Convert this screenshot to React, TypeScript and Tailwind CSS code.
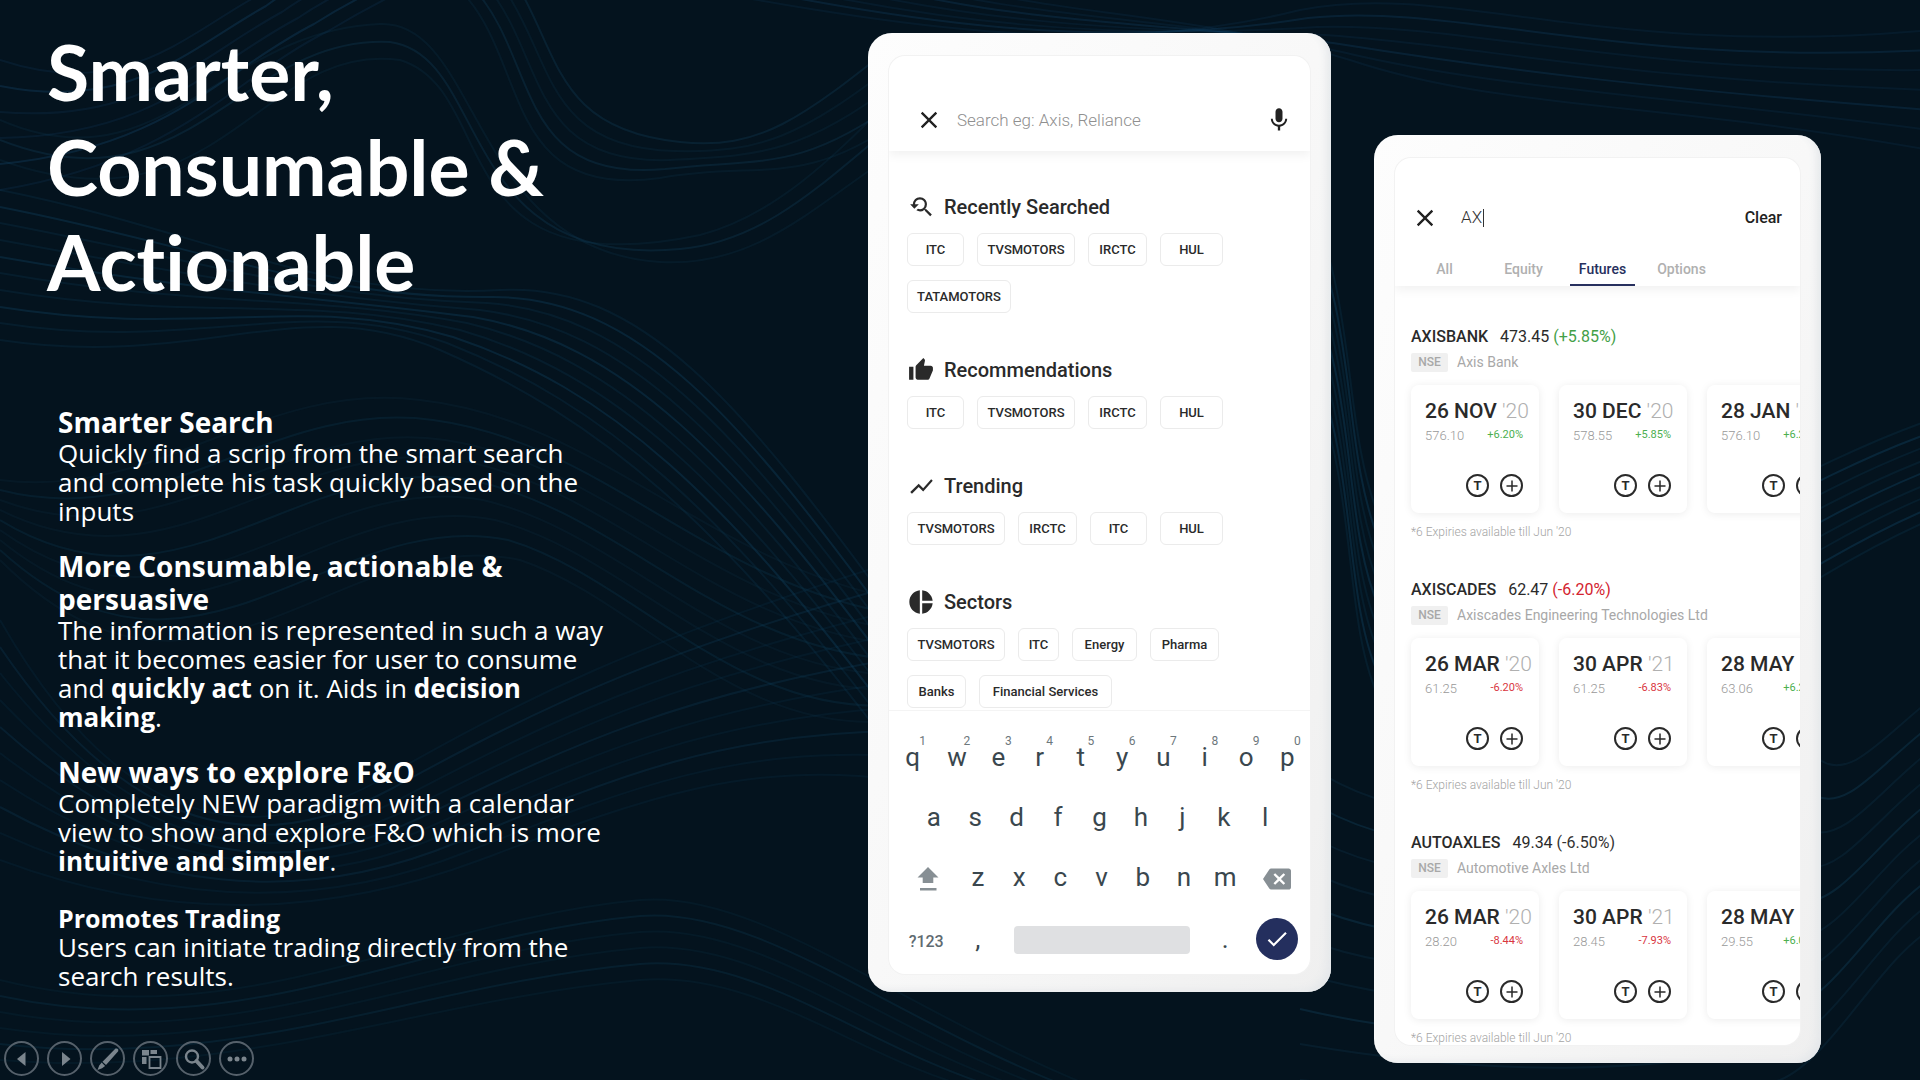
import type { ReactNode } from "react";
import {
  MdBackspace,
  MdCheck,
  MdClose,
  MdMic,
  MdPieChart,
  MdShowChart,
  MdThumbUp,
  MdYoutubeSearchedFor,
} from "react-icons/md";

/* ---------- background ---------- */

type Bundle = { from: number[]; to: number[]; count: number; color: string; opacity: number };

// Each bundle blends one cubic chain into another: x0 y0, then three points per curve.
const bundles: Bundle[] = [
  {
    from: [0, 60, 120, 100, 180, 40, 250, 0, 300, -40, 380, -60, 460, -90],
    to: [0, 190, 180, 160, 230, 80, 330, 30, 380, 0, 420, -20, 520, -60],
    count: 6, color: "#17507a", opacity: 0.24,
  },
  {
    from: [0, 120, 160, 190, 220, 30, 380, 24, 480, 20, 470, 250, 660, 262, 760, 268, 820, 200, 900, 150],
    to: [0, 160, 220, 240, 260, 40, 400, 60, 500, 90, 440, 290, 700, 235, 780, 214, 840, 150, 900, 90],
    count: 3, color: "#12415c", opacity: 0.26,
  },
  {
    from: [460, -10, 530, 60, 500, 200, 660, 178, 760, 160, 800, 190, 900, 120],
    to: [520, -10, 560, 60, 560, 130, 680, 142, 760, 150, 800, 120, 900, 40],
    count: 5, color: "#12415c", opacity: 0.26,
  },
  {
    from: [0, 190, 200, 230, 320, 300, 500, 290, 640, 282, 740, 400, 900, 620],
    to: [0, 340, 200, 370, 300, 290, 440, 350, 600, 420, 720, 520, 900, 760],
    count: 10, color: "#155a86", opacity: 0.2,
  },
  {
    from: [0, 480, 160, 500, 260, 380, 420, 400, 600, 420, 700, 560, 900, 600],
    to: [0, 560, 200, 760, 340, 520, 520, 560, 640, 600, 740, 740, 900, 720],
    count: 9, color: "#0f3c55", opacity: 0.24,
  },
  {
    from: [0, 620, 80, 760, 200, 880, 380, 780, 520, 700, 640, 640, 900, 560],
    to: [0, 860, 160, 920, 320, 920, 480, 860, 640, 800, 740, 760, 900, 780],
    count: 10, color: "#11496a", opacity: 0.2,
  },
  {
    from: [0, 980, 240, 1040, 420, 920, 640, 900, 760, 890, 900, 1010, 1100, 1090],
    to: [0, 1060, 240, 1080, 420, 1000, 640, 980, 760, 970, 860, 1060, 980, 1090],
    count: 6, color: "#10405c", opacity: 0.22,
  },
  {
    from: [600, -30, 900, 30, 1100, 60, 1300, 10, 1450, -20, 1600, 60, 1930, 30],
    to: [900, -40, 1000, 20, 1150, 0, 1350, 60, 1500, 110, 1650, 100, 1930, 150],
    count: 7, color: "#155a86", opacity: 0.18,
  },
  {
    from: [1300, 180, 1360, 300, 1340, 420, 1380, 520, 1500, 700, 1700, 500, 1930, 420],
    to: [1300, 360, 1360, 460, 1340, 620, 1380, 700, 1500, 860, 1700, 620, 1930, 520],
    count: 9, color: "#155a86", opacity: 0.22,
  },
  {
    from: [1300, 760, 1500, 900, 1650, 700, 1820, 760, 1850, 780, 1880, 740, 1930, 700],
    to: [1300, 1080, 1500, 1100, 1650, 1120, 1780, 1080, 1830, 1060, 1880, 960, 1930, 930],
    count: 10, color: "#12415c", opacity: 0.32,
  },
];

function curve(b: Bundle, t: number) {
  const p = b.from.map((v, i) => Math.round(v + (b.to[i] - v) * t));
  return `M${p[0]} ${p[1]} C${p.slice(2).join(" ")}`;
}

function Waves() {
  return (
    <svg
      className="absolute inset-0 h-full w-full"
      viewBox="0 0 1920 1080"
      preserveAspectRatio="xMidYMid slice"
      fill="none"
      aria-hidden="true"
    >
      {bundles.map((b, i) =>
        Array.from({ length: b.count }, (_, n) => (
          <path
            key={`${i}-${n}`}
            d={curve(b, n / (b.count - 1))}
            stroke={b.color}
            strokeOpacity={b.opacity * (n % 3 === 1 ? 1.2 : 0.7)}
            strokeWidth={2}
          />
        )),
      )}
    </svg>
  );
}

/* ---------- slide text ---------- */

function Point({ title, small, children }: { title: ReactNode; small?: boolean; children: ReactNode }) {
  return (
    <section className={small ? "mt-1" : ""}>
      <h2 className={small ? "text-[25px] leading-[29px] font-bold" : "text-[28px] leading-[33px] font-bold"}>
        {title}
      </h2>
      <p>{children}</p>
    </section>
  );
}

function SlideTool({ label, children }: { label: string; children: ReactNode }) {
  return (
    <button
      type="button"
      aria-label={label}
      className="flex size-[35px] items-center justify-center rounded-full border-2 border-[#56616b] text-[#7b858d]"
    >
      <svg viewBox="0 0 24 24" className="size-6" fill="currentColor" aria-hidden="true">
        {children}
      </svg>
    </button>
  );
}

function SlideTools() {
  return (
    <nav aria-label="Slide show" className="mt-auto flex gap-2 pb-1 pl-1">
      <SlideTool label="Previous slide">
        <path d="M15.500 5v14L7 12z" />
      </SlideTool>
      <SlideTool label="Next slide">
        <path d="M9 5v14l8.500-7z" />
      </SlideTool>
      <SlideTool label="Pen">
        <path d="M19.500 1.500q3.300-.5 2.700 2.700L10 18l-3.500-3.300zM5.700 15.600l3.400 3.300-3 2.300-4.600 1.900 1.700-4.600z" />
      </SlideTool>
      <SlideTool label="See all slides">
        <path d="M3 3h7v5.500H3zM11.500 3H18v4h-6.500zM3 10h4.500v7H3z" />
        <path d="M10.500 10h11v11h-11z" fill="none" stroke="currentColor" strokeWidth="1.800" />
      </SlideTool>
      <SlideTool label="Zoom">
        <circle cx="10" cy="9.500" r="6" fill="none" stroke="currentColor" strokeWidth="2.400" />
        <path d="M14.500 14l6 6.500" stroke="currentColor" strokeWidth="4" strokeLinecap="round" />
      </SlideTool>
      <SlideTool label="More options">
        <circle cx="5" cy="12" r="2.500" />
        <circle cx="12" cy="12" r="2.500" />
        <circle cx="19" cy="12" r="2.500" />
      </SlideTool>
    </nav>
  );
}

/* ---------- phones ---------- */

function Phone({ className, children }: { className: string; children: ReactNode }) {
  return (
    <article
      className={`self-start rounded-[24px] bg-linear-to-br from-[#fdfdfd] via-[#f8f8f8] to-[#efefef] px-[21px] pt-[23px] shadow-[inset_-7px_-4px_8px_-3px_#e4e7ea,inset_0_0_3px_#ffffff] ${className}`}
    >
      <div className="overflow-hidden rounded-[16px] bg-white shadow-[0_0_0_1px_#f2f2f2]">{children}</div>
    </article>
  );
}

type Chip = [label: string, width: string];

const groups: { title: string; icon: ReactNode; rows: Chip[][] }[] = [
  {
    title: "Recently Searched",
    icon: <MdYoutubeSearchedFor size={26} />,
    rows: [
      [["ITC", "w-[57px]"], ["TVSMOTORS", "w-[98px]"], ["IRCTC", "w-[59px]"], ["HUL", "w-[63px]"]],
      [["TATAMOTORS", "w-[104px]"]],
    ],
  },
  {
    title: "Recommendations",
    icon: <MdThumbUp size={26} />,
    rows: [[["ITC", "w-[57px]"], ["TVSMOTORS", "w-[98px]"], ["IRCTC", "w-[59px]"], ["HUL", "w-[63px]"]]],
  },
  {
    title: "Trending",
    icon: <MdShowChart size={27} />,
    rows: [[["TVSMOTORS", "w-[98px]"], ["IRCTC", "w-[59px]"], ["ITC", "w-[57px]"], ["HUL", "w-[63px]"]]],
  },
  {
    title: "Sectors",
    icon: <MdPieChart size={28} />,
    rows: [
      [["TVSMOTORS", "w-[98px]"], ["ITC", "w-[41px]"], ["Energy", "w-[65px]"], ["Pharma", "w-[69px]"]],
      [["Banks", "w-[59px]"], ["Financial Services", "w-[133px]"]],
    ],
  },
];

function Key({ children, hint }: { children: ReactNode; hint?: string }) {
  return (
    <button type="button" className="relative h-[60px] text-center text-[26px] leading-[60px] text-[#3a474e]">
      {children}
      {hint && (
        <span className="absolute top-1.5 left-1/2 w-5 text-center text-xs leading-4 text-[#6d777c]">{hint}</span>
      )}
    </button>
  );
}

function Keyboard() {
  return (
    <div className="border-t border-[#f4f4f4] pt-4 pb-[5px]">
      <div className="grid grid-cols-[47fr_repeat(9,41fr)] pr-0.5">
        {"qwertyuiop".split("").map((k, i) => (
          <Key key={k} hint={String((i + 1) % 10)}>{k}</Key>
        ))}
      </div>
      <div className="grid grid-cols-9 px-6">
        {"asdfghjkl".split("").map((k) => (
          <Key key={k}>{k}</Key>
        ))}
      </div>
      <div className="grid grid-cols-[68fr_repeat(7,41fr)_62fr] pr-0.5">
        <button type="button" aria-label="Shift" className="flex items-center justify-center pt-1 pl-2.5 text-[#878f94]">
          <svg viewBox="0 0 22 24" className="h-6 w-[22px]" fill="currentColor" aria-hidden="true">
            <path d="M11 0l10.500 10.500h-5.200V16H5.700v-5.500H.5zM3 21h16.500v2.500H3z" />
          </svg>
        </button>
        {"zxcvbnm".split("").map((k) => (
          <Key key={k}>{k}</Key>
        ))}
        <button type="button" aria-label="Backspace" className="flex items-center justify-center pt-1 text-[#878f94]">
          <MdBackspace size={28} />
        </button>
      </div>
      <div className="grid grid-cols-[68fr_41fr_205fr_41fr_62fr] items-center pt-0.5 pr-0.5">
        <button type="button" className="pt-1.5 pl-1.5 text-base font-medium text-[#5f6b71]">?123</button>
        <Key>,</Key>
        <button type="button" aria-label="Space" className="mx-[15px] mt-0.5 h-7 rounded-sm bg-[#dfe0e2]" />
        <Key>.</Key>
        <button
          type="button"
          aria-label="Done"
          className="flex size-[42px] items-center justify-center justify-self-center rounded-full bg-[#242f5e] text-white"
        >
          <MdCheck size={26} />
        </button>
      </div>
    </div>
  );
}

function SearchPhone() {
  return (
    <Phone className="mt-[33px] pb-[18px]">
      <form className="flex items-center gap-3.5 pt-[50px] pr-[17px] pb-[17px] pl-[26px] shadow-[0_4px_10px_rgba(0,0,0,0.06)]">
        <button type="button" aria-label="Close search" className="text-[#222222]">
          <MdClose size={28} />
        </button>
        <input
          type="search"
          aria-label="Search"
          placeholder="Search eg: Axis, Reliance"
          className="h-7 min-w-0 flex-1 text-[17px] font-light placeholder:text-[#8f8f8f] focus:outline-none"
        />
        <button type="button" aria-label="Voice search" className="text-[#222222]">
          <MdMic size={28} />
        </button>
      </form>
      <div className="flex flex-col gap-[45px] px-[18px] pt-11 pb-0.5 text-[#2a2a2a]">
        {groups.map((g) => (
          <section key={g.title} className="flex flex-col gap-3.5">
            <h3 className="flex h-6 items-center gap-[9px] text-[20px] font-medium">
              <span className="flex w-7 justify-center">{g.icon}</span>
              {g.title}
            </h3>
            {g.rows.map((row, r) => (
              <div key={r} className="flex gap-[13px]">
                {row.map(([label, width]) => (
                  <button
                    key={label}
                    type="button"
                    className={`h-[33px] rounded-md border border-[#ebebeb] text-[13px] font-medium whitespace-nowrap ${width}`}
                  >
                    {label}
                  </button>
                ))}
              </div>
            ))}
          </section>
        ))}
      </div>
      <Keyboard />
    </Phone>
  );
}

type Expiry = { day: string; year: string; price: string; change: string };
type Stock = { symbol: string; price: string; change: string; tone: string; name: string; expiries: Expiry[] };

const stocks: Stock[] = [
  {
    symbol: "AXISBANK", price: "473.45", change: "(+5.85%)", tone: "text-[#43a047]", name: "Axis Bank",
    expiries: [
      { day: "26 NOV", year: "'20", price: "576.10", change: "+6.20%" },
      { day: "30 DEC", year: "'20", price: "578.55", change: "+5.85%" },
      { day: "28 JAN", year: "'21", price: "576.10", change: "+6.20%" },
    ],
  },
  {
    symbol: "AXISCADES", price: "62.47", change: "(-6.20%)", tone: "text-[#d3232f]", name: "Axiscades Engineering Technologies Ltd",
    expiries: [
      { day: "26 MAR", year: "'20", price: "61.25", change: "-6.20%" },
      { day: "30 APR", year: "'21", price: "61.25", change: "-6.83%" },
      { day: "28 MAY", year: "'21", price: "63.06", change: "+6.20%" },
    ],
  },
  {
    symbol: "AUTOAXLES", price: "49.34", change: "(-6.50%)", tone: "text-[#333333]", name: "Automotive Axles Ltd",
    expiries: [
      { day: "26 MAR", year: "'20", price: "28.20", change: "-8.44%" },
      { day: "30 APR", year: "'21", price: "28.45", change: "-7.93%" },
      { day: "28 MAY", year: "'21", price: "29.55", change: "+6.00%" },
    ],
  },
];

function ExpiryCard({ e }: { e: Expiry }) {
  const tone = e.change.startsWith("+") ? "text-[#4caf50]" : "text-[#d9363f]";
  return (
    <li className="w-32 shrink-0 rounded-lg bg-white pt-3.5 pr-4 pb-4 pl-3.5 shadow-[0_1px_9px_rgba(0,0,0,0.08)]">
      <p className="text-[21px] leading-6 font-medium whitespace-nowrap">
        {e.day} <span className="font-light text-[#b0b0b0]">{e.year}</span>
      </p>
      <p className="mt-[3px] flex justify-between leading-5">
        <span className="text-[13px] font-light text-[#999999]">{e.price}</span>
        <span className={`text-[11px] leading-[18px] ${tone}`}>{e.change}</span>
      </p>
      <div className="mt-7 flex justify-end gap-[11px]">
        <button
          type="button"
          aria-label="Trade"
          className="flex size-[23px] items-center justify-center rounded-full border-2 border-[#2a2a2a] text-[13px] font-bold"
        >
          T
        </button>
        <button
          type="button"
          aria-label="Add"
          className="flex size-[23px] items-center justify-center rounded-full border-2 border-[#2a2a2a]"
        >
          <svg viewBox="0 0 12 12" className="size-3" stroke="currentColor" strokeWidth="1.500" aria-hidden="true">
            <path d="M6 .5v11M.5 6h11" />
          </svg>
        </button>
      </div>
    </li>
  );
}

function ResultsPhone() {
  return (
    <Phone className="mt-[135px] pb-[18px]">
      <header className="shadow-[0_4px_10px_rgba(0,0,0,0.06)]">
        <div className="flex items-center pt-[46px] pr-[18px] pl-4">
          <button type="button" aria-label="Close search" className="text-[#222222]">
            <MdClose size={28} />
          </button>
          <label className="ml-[22px] flex h-7 flex-1 items-center">
            <input
              aria-label="Search"
              defaultValue="AX"
              size={1}
              className="w-[22px] text-[17px] font-light text-[#333333] focus:outline-none"
            />
            <span className="h-[18px] w-px bg-[#333333]" />
          </label>
          <button type="button" className="text-base font-medium text-[#222222]">Clear</button>
        </div>
        <div role="tablist" className="mt-[18px] flex pl-2.5">
          {["All", "Equity", "Futures", "Options"].map((t) => (
            <button
              key={t}
              type="button"
              role="tab"
              aria-selected={t === "Futures"}
              className={
                t === "Futures"
                  ? "mx-[7px] h-9 w-[65px] border-b-2 border-[#27305e] pt-[3px] text-sm font-medium text-[#27305e]"
                  : "mx-[7px] h-9 w-[65px] border-b-2 border-transparent pt-[3px] text-sm font-medium text-[#b0b0b0]"
              }
            >
              {t}
            </button>
          ))}
        </div>
      </header>
      <div className="flex flex-col gap-[39px] pt-[39px] pl-4 text-[#2a2a2a]">
        {stocks.map((s) => (
          <section key={s.symbol}>
            <h3 className="flex gap-3 text-base leading-6 font-medium">
              {s.symbol}
              <span className="font-normal">
                {s.price} <span className={s.tone}>{s.change}</span>
              </span>
            </h3>
            <p className="mt-1 flex items-center gap-[9px] text-sm leading-[19px] text-[#a8a8a8]">
              <span className="w-[37px] rounded-xs bg-[#f0f0f0] text-center text-xs leading-[19px] font-medium">NSE</span>
              {s.name}
            </p>
            <ul className="mt-[13px] flex gap-5">
              {s.expiries.map((e) => (
                <ExpiryCard key={e.day} e={e} />
              ))}
            </ul>
            <p className="mt-[13px] text-xs leading-[13px] font-light text-[#a4a4a4]">
              *6 Expiries available till Jun '20
            </p>
          </section>
        ))}
      </div>
    </Phone>
  );
}

export default function App() {
  return (
    <main className="relative min-h-screen overflow-hidden bg-[#04131e] font-['Roboto',sans-serif]">
      <Waves />
      <div className="relative grid min-h-screen grid-cols-[minmax(0,825fr)_minmax(0,463fr)_minmax(0,447fr)] gap-x-[43px] pr-[99px]">
        <div className="flex flex-col pt-6 text-white">
          <h1 className="pl-[47px] font-['Lato',sans-serif] text-[77px] leading-[95px] font-bold [font-variant-ligatures:none]">
            Smarter,
            <br />
            Consumable &amp;
            <br />
            Actionable
          </h1>
          <div className="mt-[97px] flex flex-col gap-6 pl-[58px] font-['Open_Sans',sans-serif] text-[26px] leading-[29px]">
            <Point title="Smarter Search">
              Quickly find a scrip from the smart search
              <br />
              and complete his task quickly based on the
              <br />
              inputs
            </Point>
            <Point
              title={
                <>
                  More Consumable, actionable &amp;
                  <br />
                  persuasive
                </>
              }
            >
              The information is represented in such a way
              <br />
              that it becomes easier for user to consume
              <br />
              and <b>quickly act</b> on it. Aids in <b>decision</b>
              <br />
              <b>making</b>.
            </Point>
            <Point title="New ways to explore F&O">
              Completely NEW paradigm with a calendar
              <br />
              view to show and explore F&amp;O which is more
              <br />
              <b>intuitive and simpler</b>.
            </Point>
            <Point title="Promotes Trading" small>
              Users can initiate trading directly from the
              <br />
              search results.
            </Point>
          </div>
          <SlideTools />
        </div>
        <SearchPhone />
        <ResultsPhone />
      </div>
    </main>
  );
}
